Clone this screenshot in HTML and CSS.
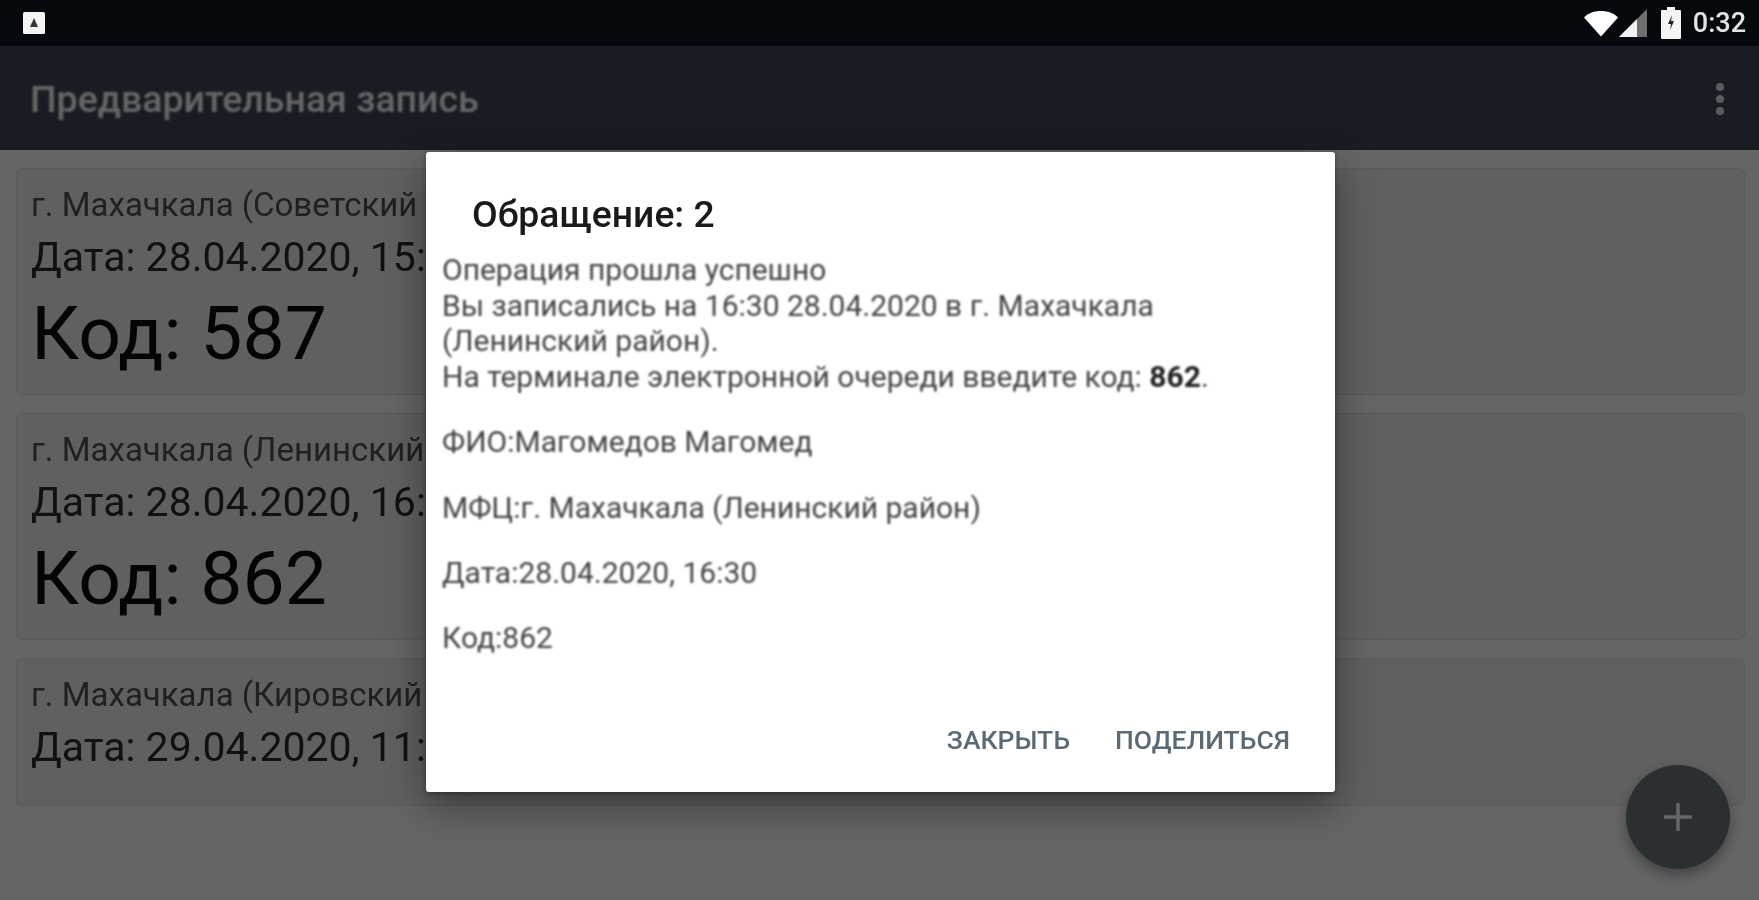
FILE: index.html
```html
<!DOCTYPE html>
<html lang="ru">
<head>
<meta charset="utf-8">
<title>Предварительная запись</title>
<link rel="stylesheet" href="styles.css">
</head>
<body>
<div class="screen">
  <header class="statusbar">
    <span class="notif"><svg width="22" height="22" viewBox="0 0 22 22"><rect width="22" height="22" rx="1.5" fill="#f4f4f4"/><path d="M11 6l4 9H7z" fill="#333"/></svg></span>
    <div class="status-right">
      <svg class="wifi" width="34" height="27" viewBox="0 0 36 27" preserveAspectRatio="none"><path d="M0 7.500C4.500 3 11 1 18 1s13.500 2 18 6.500L18 26.500z" fill="#fff"/></svg>
      <svg class="signal" width="28" height="28" viewBox="0 0 28 28"><path d="M28 0v28H0z" fill="#6e6e6e"/><path d="M18 10v18H0z" fill="#f2f2f2"/></svg>
      <svg class="battery" width="20" height="32" viewBox="0 0 20 32"><path d="M6 0h8v3h5a1 1 0 0 1 1 1v27a1 1 0 0 1-1 1H1a1 1 0 0 1-1-1V4a1 1 0 0 1 1-1h5z" fill="#f5f5f5"/><path d="M11 8l-4 9h3l-1 6 4-9h-3z" fill="#222"/></svg>
      <span class="clock">0:32</span>
    </div>
  </header>
  <div class="body">
    <div class="appbar">
      <h1 class="appbar-title">Предварительная запись</h1>
      <div class="menu"><i></i><i></i><i></i></div>
    </div>
    <main class="list">
      <article class="card">
        <div class="place">г. Махачкала (Советский</div>
        <div class="date">Дата: 28.04.2020, 15:</div>
        <div class="code">Код: 587</div>
      </article>
      <article class="card">
        <div class="place">г. Махачкала (Ленинский</div>
        <div class="date">Дата: 28.04.2020, 16:</div>
        <div class="code">Код: 862</div>
      </article>
      <article class="card card-short">
        <div class="place">г. Махачкала (Кировский</div>
        <div class="date">Дата: 29.04.2020, 11:</div>
      </article>
    </main>
    <button class="fab"><svg width="28" height="28" viewBox="0 0 28 28"><path d="M14 0v28M0 14h28" stroke="#fff" stroke-width="3.500" fill="none"/></svg></button>
    <div class="scrim"></div>
    <section class="dialog">
      <h2 class="dialog-title">Обращение: 2</h2>
      <div class="dialog-text">
        <p>Операция прошла успешно<br>Вы записались на 16:30 28.04.2020 в г. Махачкала<br>(Ленинский район).<br>На терминале электронной очереди введите код: <b>862</b>.</p>
        <p>ФИО:Магомедов Магомед</p>
        <p>МФЦ:г. Махачкала (Ленинский район)</p>
        <p>Дата:28.04.2020, 16:30</p>
        <p>Код:862</p>
      </div>
      <div class="dialog-actions">
        <span class="action">Закрыть</span>
        <span class="action">Поделиться</span>
      </div>
    </section>
  </div>
</div>
</body>
</html>
```
FILE: styles.css
```css
* { box-sizing: border-box; }
html, body { margin: 0; height: 100%; }
body { font-family: Roboto, "Noto Sans", sans-serif; overflow: hidden; background: #000; }
.screen { width: 1759px; height: 900px; display: flex; flex-direction: column; }

.statusbar { height: 46px; background: #05090d; display: flex; align-items: center; justify-content: space-between; padding: 0 13px 0 23px; filter: blur(.7px); }
.notif { display: flex; }
.status-right { display: flex; align-items: center; }
.wifi { margin-right: 1px; }
.signal { margin-right: 14px; }
.battery { margin-right: 12px; }
.clock { color: #e4e4e4; font-size: 27px; font-weight: 500; }

.body { flex: 1; position: relative; background: #fdfdfd; display: flex; flex-direction: column; }
.appbar { height: 104px; background: #3d4858; display: flex; align-items: center; justify-content: space-between; padding: 2px 35px 0 30px; flex: none; }
.appbar-title { margin: 0; color: #fff; font-size: 37.500px; font-weight: 500; filter: blur(.8px); }
.menu { display: flex; flex-direction: column; gap: 4px; filter: blur(.7px); }
.menu i { width: 8px; height: 8px; border-radius: 50%; background: #e6e6e6; }

.list { padding: 18px 14px 0 16px; display: flex; flex-direction: column; gap: 18px; }
.card { height: 227px; background: #f0f0f0; border: 1px solid #e2e2e2; border-radius: 6px; padding: 16px 14px 0 14px; }
.card-short { height: 148px; }
.place { font-size: 33px; line-height: 40px; color: #525252; white-space: nowrap; filter: blur(.7px); }
.date { font-size: 41px; line-height: 50px; margin-top: 7px; color: #2c2c2c; white-space: nowrap; filter: blur(.7px); }
.code { font-size: 75px; line-height: 90px; margin-top: 6px; color: #0c0c0c; filter: blur(.7px); }

.fab { position: absolute; left: 1626px; top: 719px; width: 104px; height: 104px; border: 0; border-radius: 50%; background: #69787e; display: flex; align-items: center; justify-content: center; padding: 0; box-shadow: 0 6px 14px rgba(0,0,0,.35); }
.fab svg { filter: blur(.7px); }

.scrim { position: absolute; inset: 0; background: rgba(0,0,0,.6); }

.dialog { position: absolute; left: 426px; top: 106px; width: 909px; height: 640px; background: #fff; border-radius: 3px; box-shadow: 0 14px 40px rgba(0,0,0,.4), 0 2px 5px rgba(0,0,0,.3); display: flex; flex-direction: column; }
.dialog-title { margin: 0; padding: 38px 0 0 46px; height: 92px; font-size: 37.300px; line-height: 48px; font-weight: 500; color: #1a1a1a; filter: blur(.7px); }
.dialog-text { padding: 8px 16px 0; font-size: 30px; line-height: 35.600px; color: #444; flex: 1; filter: blur(.8px); }
.dialog-text p { margin: 0 0 29.800px; }
.dialog-text b { color: #222; }
.dialog-actions { display: flex; justify-content: flex-end; gap: 45px; padding: 0 45px 36px 0; filter: blur(.7px); }
.action { font-size: 26.500px; line-height: 32px; font-weight: 500; text-transform: uppercase; color: #5c6a76; }
```
